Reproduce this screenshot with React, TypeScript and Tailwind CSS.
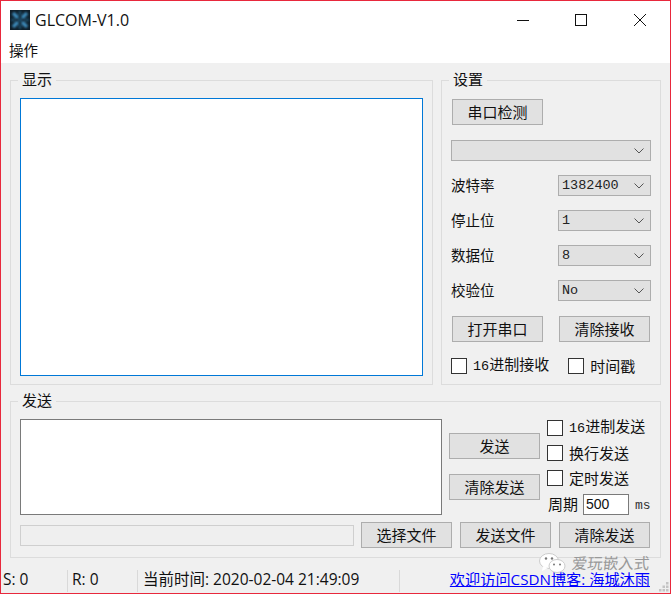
const cjk = "font-['Noto_Sans_CJK_SC','Liberation_Sans',sans-serif]";
const mono = "font-['Liberation_Mono','Noto_Sans_CJK_SC',monospace]";

function Btn({ label, className = "" }: { label: string; className?: string }) {
  return (
    <button className={`flex h-[26px] w-[91px] shrink-0 items-center justify-center border border-[#adadad] bg-[#e1e1e1] pb-[2px] text-[15px] leading-none text-[#111] ${cjk} ${className}`}>
      {label}
    </button>
  );
}

function Combo({ value = "", className = "" }: { value?: string; className?: string }) {
  return (
    <div className={`flex h-[21px] items-center justify-between border border-[#adadad] bg-[#e1e1e1] pl-[3px] pr-[6px] text-[13.5px] text-[#222] ${mono} ${className}`}>
      <span className="pt-[2px]">{value}</span>
      <svg width="10" height="6" viewBox="0 0 10 6" fill="none" stroke="#555">
        <path d="M0.5 0.5 L5 5 L9.5 0.5" />
      </svg>
    </div>
  );
}

function SettingRow({ label, value }: { label: string; value: string }) {
  return (
    <div className="flex h-[21px] items-center justify-between pr-[9px]">
      <span className={`-mt-[2px] text-[14.5px] text-[#111] ${cjk}`}>{label}</span>
      <Combo value={value} className="w-[93px]" />
    </div>
  );
}

function Check({ digits = "", label, className = "" }: { digits?: string; label: string; className?: string }) {
  return (
    <div className={`flex h-4 items-center gap-[6px] ${className}`}>
      <span className="h-4 w-4 shrink-0 border border-[#333] bg-white" />
      <span className={`pb-[2px] text-[15px] leading-none whitespace-nowrap text-[#111] ${cjk}`}>
        {digits && <span className={`text-[13.5px] ${mono}`}>{digits}</span>}
        {label}
      </span>
    </div>
  );
}

function Group({ title, className = "", children }: { title: string; className?: string; children: React.ReactNode }) {
  return (
    <div className={`relative border border-[#dcdcdc] ${className}`}>
      <span className={`absolute -top-[11px] left-[7px] bg-[#f0f0f0] px-1 text-[15px] leading-[18px] text-[#111] ${cjk}`}>
        {title}
      </span>
      {children}
    </div>
  );
}

function Logo() {
  return (
    <svg width="20" height="20" viewBox="0 0 20 20" className="mt-[6px]">
      <defs>
        <filter id="soft" x="-10%" y="-10%" width="120%" height="120%">
          <feGaussianBlur stdDeviation="0.8" />
        </filter>
      </defs>
      <rect width="20" height="20" fill="#0f1d28" />
      <g filter="url(#soft)">
        <path d="M3 3 L8 8 M17 3 L12 8 M3 17 L8 12 M17 17 L12 12" stroke="#3c8dbd" strokeWidth="3.5" />
        <path d="M10 1 V5 M10 15 V19 M1 10 H5 M15 10 H19" stroke="#1b4863" strokeWidth="3" />
        <circle cx="10" cy="10" r="1.8" fill="#1f587a" />
      </g>
    </svg>
  );
}

export default function App() {
  return (
    <div className="flex h-[594px] w-[671px] flex-col overflow-hidden border border-[#e8283c] bg-[#f0f0f0]">
      {/* title bar */}
      <div className="flex h-[31px] shrink-0 items-center bg-white pl-[9px]">
        <Logo />
        <span className="mt-[6px] ml-[5px] font-['Open_Sans',sans-serif] text-[16px] text-[#111]">GLCOM-V1.0</span>
        <div className="ml-auto mt-[6px] flex items-center">
          <svg width="14" height="14" viewBox="0 0 14 14" className="mr-[44px]" stroke="#111" fill="none">
            <path d="M1 7.5 H13" />
          </svg>
          <svg width="14" height="14" viewBox="0 0 14 14" className="mr-[45px]" stroke="#111" fill="none">
            <rect x="1.5" y="1.5" width="11" height="11" />
          </svg>
          <svg width="14" height="14" viewBox="0 0 14 14" className="mr-[23px]" stroke="#111" fill="none">
            <path d="M1 1 L13 13 M13 1 L1 13" />
          </svg>
        </div>
      </div>
      {/* menu */}
      <div className={`flex h-[31px] shrink-0 items-center bg-white pt-[5px] pl-[8px] text-[14.5px] text-[#111] ${cjk}`}>操作</div>

      <div className="relative flex flex-1 flex-col px-[9px] pt-[17px]">
        <div className="flex h-[305px] gap-2">
          <Group title="显示" className="w-[423px] pl-[9px] pt-[17px]">
            <div className="h-[278px] w-[403px] border border-[#0078d7] bg-white" />
          </Group>
          <Group title="设置" className="w-[220px] pl-[9px] pt-[18px]">
            <Btn label="串口检测" className="ml-px" />
            <Combo className="mt-[15px] w-[200px]" />
            <div className="mt-[14px] flex flex-col gap-[14px]">
              <SettingRow label="波特率" value="1382400" />
              <SettingRow label="停止位" value="1" />
              <SettingRow label="数据位" value="8" />
              <SettingRow label="校验位" value="No" />
            </div>
            <div className="mt-[15px] flex gap-4 pl-px">
              <Btn label="打开串口" />
              <Btn label="清除接收" />
            </div>
            <div className="mt-4 flex gap-[19px]">
              <Check digits="16" label="进制接收" />
              <Check label="时间戳" />
            </div>
          </Group>
        </div>

        <Group title="发送" className="mt-4 h-[157px] w-[651px] pl-[9px] pt-[17px]">
          <div className="flex">
            <div className="h-[96px] w-[422px] border border-[#7a7a7a] bg-white" />
            <div className="ml-[7px] flex flex-col gap-[15px] pt-[14px]">
              <Btn label="发送" />
              <Btn label="清除发送" />
            </div>
            <div className="ml-[7px] flex flex-col gap-[9px] pt-px">
              <Check digits="16" label="进制发送" />
              <Check label="换行发送" />
              <Check label="定时发送" />
              <div className="-mt-px flex h-[21px] items-center pl-px">
                <span className={`text-[15px] text-[#111] ${cjk}`}>周期</span>
                <span className="ml-[5px] flex h-[21px] w-[46px] items-center border border-[#7a7a7a] bg-white pl-[2px] font-['Liberation_Sans',sans-serif] text-[14px] text-[#111]">500</span>
                <span className={`ml-[6px] pt-[2px] text-[13px] text-[#333] ${mono}`}>ms</span>
              </div>
            </div>
          </div>
          <div className="mt-[7px] flex items-center">
            <div className="h-[21px] w-[334px] border border-[#cfcfcf] bg-[#efefef]" />
            <Btn label="选择文件" className="ml-[7px]" />
            <Btn label="发送文件" className="ml-2" />
            <Btn label="清除发送" className="ml-2" />
          </div>
        </Group>

        <div className="mt-[12px] -ml-[9px] -mr-[9px] flex h-[22px] items-center font-['Open_Sans','Noto_Sans_CJK_SC',sans-serif] text-[15.5px] leading-none text-[#111]">
          <span className="flex h-full w-[67px] items-center border-r border-[#d9d9d9] pb-[2px] pl-[2px]">S: 0</span>
          <span className="flex h-full w-[70px] items-center border-r border-[#d9d9d9] pb-[2px] pl-[4px]">R: 0</span>
          <span className="flex h-full w-[262px] items-center border-r border-[#d9d9d9] pb-[2px] pl-[5px] whitespace-nowrap">当前时间: 2020-02-04 21:49:09</span>
          <a className="mr-[20px] ml-auto pb-[2px] text-[15.2px] whitespace-nowrap text-[#0000ff] underline">欢迎访问CSDN博客: 海城沐雨</a>
        </div>

        {/* watermark */}
        <div className="absolute right-[20px] bottom-[20px] flex items-center gap-[6px]">
          <svg width="27" height="20" viewBox="0 0 27 20">
            <ellipse cx="10" cy="8" rx="9.5" ry="7.5" fill="#fff" stroke="#ccc" />
            <path d="M4 13 L3 18 L9 15 Z" fill="#fff" />
            <ellipse cx="18" cy="13" rx="8" ry="6.5" fill="#fff" stroke="#ccc" />
            <circle cx="7" cy="5.5" r="1.2" fill="#777" />
            <circle cx="13" cy="5.5" r="1.2" fill="#777" />
            <circle cx="15" cy="11.5" r="1" fill="#777" />
            <circle cx="21" cy="11.5" r="1" fill="#777" />
          </svg>
          <span className={`-skew-x-6 text-[15.5px] leading-none text-[#999] ${cjk}`}>爱玩嵌入式</span>
        </div>

        {/* size grip */}
        <svg width="10" height="10" viewBox="0 0 10 10" className="absolute right-[1px] bottom-[1px]" fill="#c4c4c4">
          <rect x="7" y="0" width="2.5" height="2.5" />
          <rect x="3.5" y="3.5" width="2.5" height="2.5" />
          <rect x="7" y="3.5" width="2.5" height="2.5" />
          <rect x="0" y="7" width="2.5" height="2.5" />
          <rect x="3.5" y="7" width="2.5" height="2.5" />
          <rect x="7" y="7" width="2.5" height="2.5" />
        </svg>
      </div>
    </div>
  );
}
